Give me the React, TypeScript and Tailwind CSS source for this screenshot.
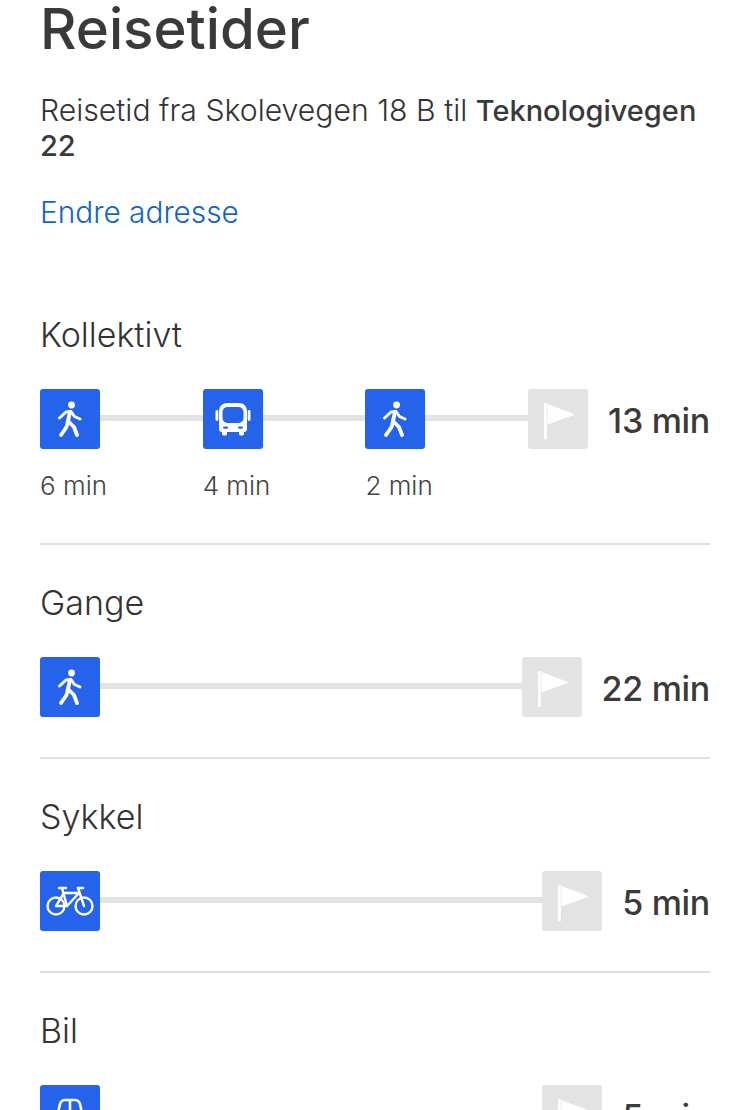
import React from 'react';

type Mode = 'walk' | 'bus' | 'bike' | 'car';

function WalkIcon() {
  return (
    <svg viewBox="0 0 24 36" className="h-[36px] w-[24px]" fill="none" stroke="white" strokeWidth="3" strokeLinecap="round" strokeLinejoin="round">
      <circle cx="13.5" cy="4" r="3.4" fill="white" stroke="none" />
      <path d="M1.5 17 L8 11 L13 10.5 L16.5 15.5 L22 18" />
      <path d="M12 11 L10 20 L16 26 L19 34" strokeWidth="3.8" />
      <path d="M10 20 L8.5 26 L3 34" strokeWidth="3.8" />
    </svg>
  );
}

function BusIcon() {
  return (
    <svg viewBox="0 0 36 36" className="h-[36px] w-[36px]" fill="none">
      <path d="M13 2 H23 C29 2 32 5 32 11 V28 C32 30 31 31 29 31 V33 C29 35 24 35 24 33 V31 H12 V33 C12 35 7 35 7 33 V31 C5 31 4 30 4 28 V11 C4 5 7 2 13 2 Z" fill="white" />
      <rect x="7.5" y="6" width="21" height="16" rx="5" fill="#2563eb" />
      <rect x="0.5" y="9" width="2.8" height="11" rx="1.4" fill="white" />
      <rect x="32.7" y="9" width="2.8" height="11" rx="1.4" fill="white" />
      <rect x="8" y="25.5" width="5" height="2.2" rx="1.1" fill="#2563eb" />
      <rect x="23" y="25.5" width="5" height="2.2" rx="1.1" fill="#2563eb" />
    </svg>
  );
}

function BikeIcon() {
  return (
    <svg viewBox="0 0 48 30" className="h-[30px] w-[48px]" fill="none" stroke="white" strokeWidth="2.4" strokeLinecap="round" strokeLinejoin="round">
      <circle cx="10" cy="20" r="8.5" />
      <circle cx="38" cy="20" r="8.5" />
      <path d="M10 20 L18 7 H33 L21 20 H10" />
      <path d="M38 20 L32 2 H37" />
      <path d="M16 2 L21 20" />
      <path d="M13 2 H20" />
    </svg>
  );
}

function CarIcon() {
  return (
    <svg viewBox="0 0 36 36" className="h-[36px] w-[36px]" fill="none" stroke="white" strokeWidth="2.6" strokeLinejoin="round">
      <path d="M6 16 L8 7 C9 4 11 3 13 3 H23 C25 3 27 4 28 7 L30 16" />
      <path d="M18 3 V16" />
      <path d="M3 16 H33 V28 H3 Z" fill="white" />
    </svg>
  );
}

function ModeBadge({ mode }: { mode: Mode }) {
  return (
    <div className="flex h-[60px] w-[60px] shrink-0 items-center justify-center overflow-hidden rounded-[3px] bg-[#2563eb]">
      {mode === 'walk' && <WalkIcon />}
      {mode === 'bus' && <BusIcon />}
      {mode === 'bike' && <BikeIcon />}
      {mode === 'car' && <CarIcon />}
    </div>
  );
}

function FlagBadge() {
  return (
    <div className="flex h-[60px] w-[60px] shrink-0 items-center justify-center rounded-[3px] bg-[#e3e3e3] pt-[3px] pl-[3px]">
      <svg viewBox="0 0 31 36" className="h-[36px] w-[31px]">
        <rect x="0" y="0" width="2.8" height="36" fill="white" />
        <path d="M3.5 1 L31 11.5 L3.5 21.5 Z" fill="white" />
      </svg>
    </div>
  );
}

type Leg = { mode: Mode; label?: string };

function RouteRow({ legs, total }: { legs: Leg[]; total: string }) {
  return (
    <div className="mt-[34px] flex items-start">
      <div className="flex min-w-0 flex-1">
        {legs.map((leg, i) => (
          <div key={i} className="min-w-0 flex-1">
            <div className="flex items-center">
              <ModeBadge mode={leg.mode} />
              <div className="mb-[3px] h-[6px] flex-1 bg-[#e3e3e3]" />
            </div>
            {leg.label && <div className="mt-[21px] text-[26px] leading-[32px] font-light text-[#444]">{leg.label}</div>}
          </div>
        ))}
        <FlagBadge />
      </div>
      <div className="ml-[20px] flex h-[60px] items-center pt-[3px] text-[34px] font-medium tracking-[-0.3px] whitespace-nowrap text-[#3a3a3a]">{total}</div>
    </div>
  );
}

function Section({ title, children }: { title: string; children: React.ReactNode }) {
  return (
    <section>
      <h2 className="text-[34px] leading-[40px] font-light text-[#333]">{title}</h2>
      {children}
    </section>
  );
}

export default function App() {
  return (
    <div className="h-[1110px] w-[750px] overflow-hidden bg-white px-[40px] font-['Inter',sans-serif]">
      <h1 className="text-[56.4px] leading-[58px] font-medium text-[#3a3a3a]">Reisetider</h1>
      <p className="mt-[35px] text-[30.2px] leading-[35px] font-light text-[#333]">
        Reisetid fra Skolevegen 18 B til <strong className="text-[29px] font-medium text-[#3a3a3a]">Teknologivegen 22</strong>
      </p>
      <a className="mt-[31px] block text-[29.8px] leading-[36px] font-light text-[#1466bd]">Endre adresse</a>

      <div className="mt-[85px]">
        <Section title="Kollektivt">
          <RouteRow
            total="13 min"
            legs={[
              { mode: 'walk', label: '6 min' },
              { mode: 'bus', label: '4 min' },
              { mode: 'walk', label: '2 min' },
            ]}
          />
        </Section>
        <div className="mt-[41px] h-[2px] bg-[#e0e0e0]" />
        <div className="mt-[38px]">
          <Section title="Gange">
            <RouteRow total="22 min" legs={[{ mode: 'walk' }]} />
          </Section>
        </div>
        <div className="mt-[40px] h-[2px] bg-[#e0e0e0]" />
        <div className="mt-[38px]">
          <Section title="Sykkel">
            <RouteRow total="5 min" legs={[{ mode: 'bike' }]} />
          </Section>
        </div>
        <div className="mt-[40px] h-[2px] bg-[#e0e0e0]" />
        <div className="mt-[38px]">
          <Section title="Bil">
            <RouteRow total="5 min" legs={[{ mode: 'car' }]} />
          </Section>
        </div>
      </div>
    </div>
  );
}
